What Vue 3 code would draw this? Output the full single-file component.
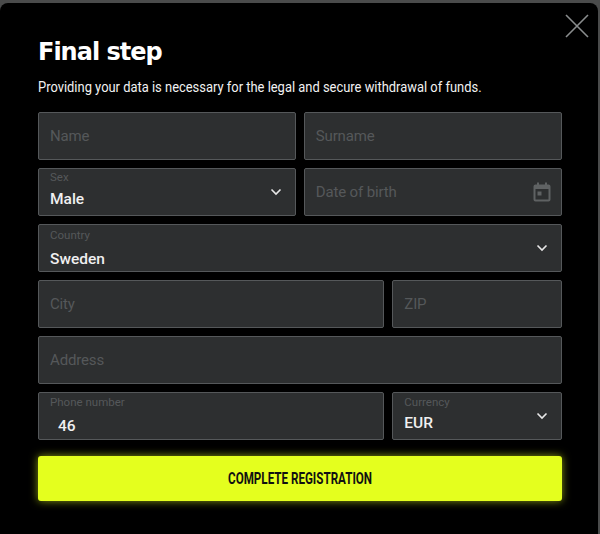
<script setup>
const rows = [
  [{ label: 'Name', span: 6 }, { label: 'Surname', span: 6 }],
  [{ label: 'Sex', value: 'Male', span: 6, select: true }, { label: 'Date of birth', span: 6, date: true }],
  [{ label: 'Country', value: 'Sweden', span: 12, select: true, low: true }],
  [{ label: 'City', span: 8 }, { label: 'ZIP', span: 4 }],
  [{ label: 'Address', span: 12 }],
  [{ label: 'Phone number', value: '46', span: 8, phone: true }, { label: 'Currency', value: 'EUR', span: 4, select: true, cur: true }],
]
const fields = rows.flat()
</script>

<template>
  <div class="backdrop">
    <section class="modal">
      <button class="close" aria-label="Close">
        <svg width="26" height="26" viewBox="0 0 26 26" fill="none" stroke="#8a8d8e" stroke-width="1.6">
          <path d="M2 2 L24 24 M24 2 L2 24" />
        </svg>
      </button>
      <h1 class="title">Final step</h1>
      <p class="sub">Providing your data is necessary for the legal and secure withdrawal of funds.</p>
      <form class="grid" @submit.prevent>
        <div
          v-for="f in fields"
          :key="f.label"
          class="field"
          :class="['s' + f.span, { filled: f.value, low: f.low, phone: f.phone, cur: f.cur }]"
        >
          <span class="label">{{ f.label }}</span>
          <span v-if="f.value" class="value">{{ f.value }}</span>
          <svg v-if="f.select" class="chev" width="12" height="8" viewBox="0 0 12 8" fill="none" stroke="#e8e8e8" stroke-width="1.6">
            <path d="M1.5 1.5 L6 6 L10.5 1.5" />
          </svg>
          <svg v-if="f.date" class="cal" width="18" height="20" viewBox="0 0 18 20" fill="#5f6263">
            <path d="M4 0.5h2v2h6v-2h2v2h1.5A2 2 0 0 1 17.500 4.500v13a2 2 0 0 1-2 2h-13a2 2 0 0 1-2-2v-13a2 2 0 0 1 2-2H4z M2.500 7v10.500h13V7z" />
            <rect x="4.500" y="9.500" width="4" height="4" />
          </svg>
        </div>
        <button class="submit" type="submit"><span class="submit-text">COMPLETE REGISTRATION</span></button>
      </form>
    </section>
  </div>
</template>

<style>
html, body { margin: 0; background: #4a4a4a; }
</style>

<style scoped>
.backdrop {
  width: 600px;
  height: 534px;
  box-sizing: border-box;
  padding: 3px 2px 0 0;
  background: #4a4b4b;
  overflow: hidden;
  font-family: Roboto, "Noto Sans", sans-serif;
}
.modal {
  position: relative;
  height: 531px;
  box-sizing: border-box;
  padding: 34px 36px 0 38px;
  background: #000;
  border-radius: 8px 8px 0 0;
}
.close {
  position: absolute;
  top: 10px;
  right: 8px;
  width: 26px;
  height: 26px;
  padding: 0;
  border: 0;
  background: none;
  display: block;
}
.close svg { display: block; }
.title {
  margin: 0;
  font-family: "DejaVu Sans", sans-serif;
  font-size: 24px;
  line-height: 30px;
  font-weight: 700;
  color: #fff;
  letter-spacing: -1px;
}
.sub {
  margin: 10px 0 0;
  font-size: 14px;
  line-height: 20px;
  color: #f2f2f2;
  white-space: nowrap;
  transform: scaleX(0.923);
  transform-origin: left center;
}
.grid {
  display: grid;
  grid-template-columns: repeat(12, 1fr);
  gap: 8px;
  margin-top: 15px;
  width: 523.500px;
}
.field {
  position: relative;
  height: 48px;
  box-sizing: border-box;
  padding: 0 11px;
  display: flex;
  flex-direction: column;
  justify-content: center;
  background: #2d2f30;
  border: 1px solid #55585a;
  border-radius: 2px;
}
.s4 { grid-column: 9 / span 4; }
.s6 { grid-column: span 6; }
.s8 { grid-column: 1 / span 8; }
.s12 { grid-column: span 12; }
.label {
  font-size: 15px;
  line-height: 18px;
  color: #55585a;
  letter-spacing: -0.15px;
}
.filled { justify-content: flex-start; }
.filled .label {
  font-size: 11.500px;
  line-height: 13px;
  margin-top: 2px;
  letter-spacing: 0;
}
.value {
  font-size: 15.500px;
  line-height: 18px;
  margin-top: 6px;
  color: #f0f0f0;
  font-weight: 500;
}
.low .label { margin-top: 4px; }
.low .value { margin-top: 8px; }
.phone .label, .cur .label { margin-top: 3px; }
.phone .value { margin-top: 8px; padding-left: 8px; }
.cur .value { margin-top: 5px; }
.chev {
  position: absolute;
  right: 13px;
  top: 19px;
}
.cal {
  position: absolute;
  right: 10px;
  top: 13px;
}
.submit {
  grid-column: span 12;
  height: 45px;
  margin-top: 8px;
  border: 0;
  border-radius: 3px;
  background: #e4ff1e;
  box-shadow: 0 0 9px rgba(228, 255, 30, 0.6);
  color: #111;
  font-family: Roboto, sans-serif;
  font-size: 16px;
  font-weight: 700;
}
.submit-text {
  display: inline-block;
  transform: scaleX(0.727);
  white-space: nowrap;
}
</style>
